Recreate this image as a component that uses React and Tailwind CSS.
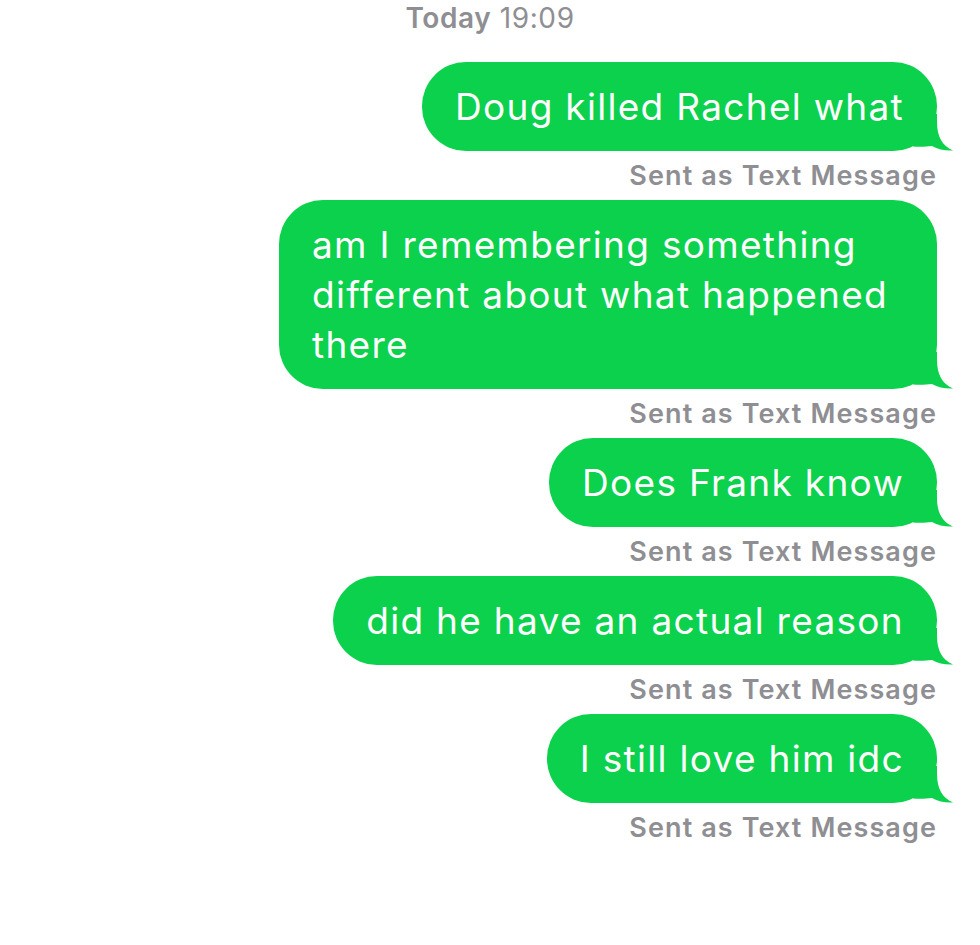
import React from 'react';

const messages = [
  'Doug killed Rachel what',
  'am I remembering something different about what happened there',
  'Does Frank know',
  'did he have an actual reason',
  'I still love him idc',
];

// Tail drawn at the bottom-right corner of each bubble
const Tail = () => (
  <svg
    className="absolute bottom-0 right-[-16px]"
    width="40"
    height="37"
    viewBox="0 0 40 37"
  >
    <path
      d="M0 0 H24 V8 C24 22 29 32 40 36.5 C33 37 25 35.5 19 32 C14 32.5 8 33 0 32.5 Z"
      fill="#0bd14c"
    />
  </svg>
);

const Bubble = ({ text }) => (
  <div className="flex flex-col items-end">
    <div className="relative max-w-[658px] rounded-[44px] bg-[#0bd14c] px-[33px] py-[19.5px] text-[37px] leading-[50px] tracking-[1.3px] text-white">
      <Tail />
      <span className="relative">{text}</span>
    </div>
    <div className="mt-[9px] mb-[8px] text-[27px] leading-[32px] font-semibold tracking-[1.1px] text-[#8e8e93]">
      Sent as Text Message
    </div>
  </div>
);

export default function App() {
  return (
    <div className="w-[980px] h-[945px] overflow-hidden bg-white font-['Inter',sans-serif]">
      <div className="h-[36px] text-center text-[28px] leading-[36px] tracking-[0.6px] text-[#8e8e93]">
        <span className="font-semibold">Today</span> 19:09
      </div>
      <div className="mt-[26px] flex flex-col pr-[43px]">
        {messages.map((m, i) => (
          <Bubble key={i} text={m} />
        ))}
      </div>
    </div>
  );
}
